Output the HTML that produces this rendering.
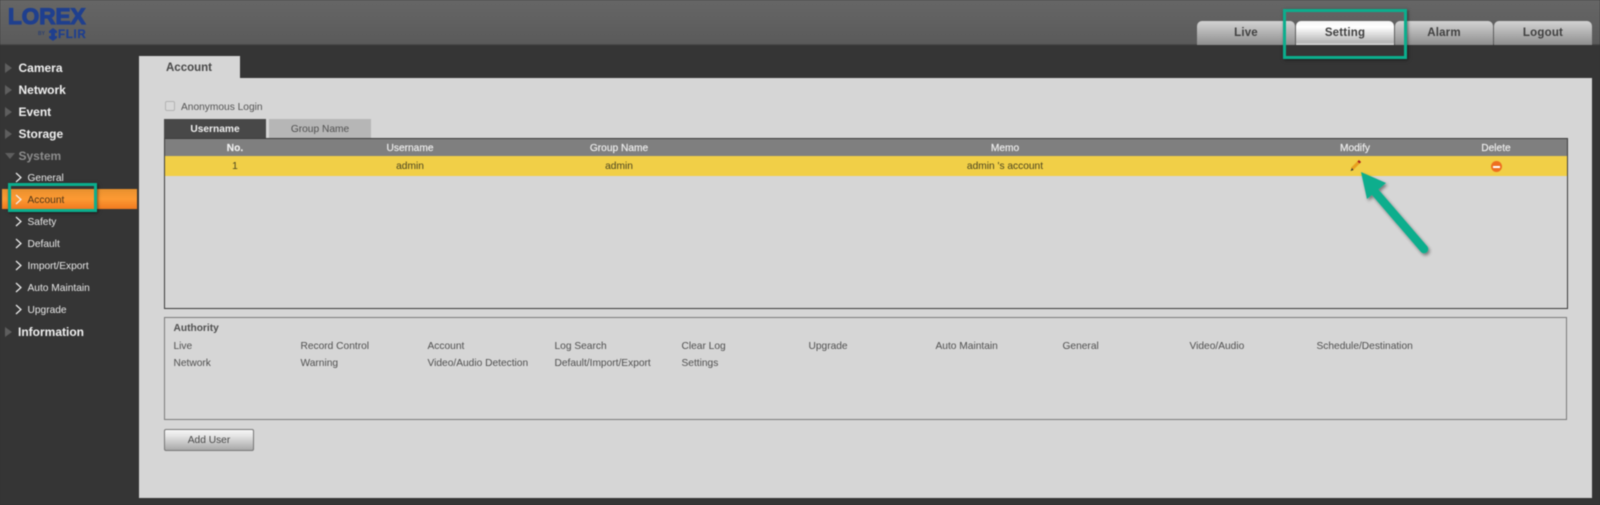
<!DOCTYPE html>
<html><head><meta charset="utf-8"><style>
html,body{margin:0;padding:0;background:#353535}
#p{position:relative;width:1600px;height:505px;overflow:hidden;background:#353535;font-family:"Liberation Sans",sans-serif;font-size:10.2px;color:#4a4a4a;filter:blur(.4px)}
#p div{position:absolute;box-sizing:border-box;white-space:nowrap}
.hd{left:0;top:0;width:1600px;height:45px;background:linear-gradient(#666,#5a5a5a)}
.tab{top:21px;height:24px;width:98px;border-radius:5px 5px 0 0;background:linear-gradient(#d2d2d2,#c6c6c6 20%,#8e8e8e);text-align:center;font-weight:bold;font-size:11.5px;line-height:24px;color:#404040;letter-spacing:.2px}
.nb{left:18.5px;font-weight:bold;font-size:12px;color:#f0f0f0;height:16px;line-height:16px}
.ns{left:27.5px;font-size:10.2px;color:#e8e8e8;height:14px;line-height:14px}
.tri{left:5px;width:0;height:0;border-left:7px solid #5e5e5e;border-top:5px solid transparent;border-bottom:5px solid transparent}
.th{top:140px;height:17px;line-height:17px;transform:translateX(-50%);color:#f0f0f0;-webkit-text-stroke:.15px #f0f0f0}
.td{top:157px;height:20px;line-height:20px;transform:translateX(-50%);color:#4a4420}
.a{height:14px;line-height:14px;color:#505050}
</style></head><body><div id="p">
<div class="hd"></div>
<div style="left:0;top:44px;width:1600px;height:1px;background:#4a4a4a"></div>
<div style="left:8px;top:4px;font-size:22.500px;font-weight:bold;color:#1f3f8e;line-height:26px;-webkit-text-stroke:1.2px #1f3f8e">LOREX</div>
<div style="left:38px;top:31px;font-size:5px;font-weight:bold;color:#2a3f70;line-height:7px">BY</div>
<svg style="position:absolute;left:48px;top:28px" width="10" height="13" viewBox="0 0 10 13"><path d="M5 0L9 3V5H7V8H9V10L5 13L1 10V8H3V5H1V3Z" fill="#1f3f8e"/></svg>
<div style="left:58px;top:28.500px;font-size:11.500px;font-weight:bold;color:#1f3f8e;line-height:12px;letter-spacing:.7px;-webkit-text-stroke:.3px #1f3f8e">FLIR</div>

<div class="tab" style="left:1197px">Live</div>
<div class="tab" style="left:1296px;background:linear-gradient(#f6f6f6,#fff 25%,#b5b5b5 90%,#e8e8e8)">Setting</div>
<div class="tab" style="left:1395px">Alarm</div>
<div class="tab" style="left:1494px">Logout</div>
<div style="left:1283px;top:9px;width:124px;height:50px;border:3px solid #0bae8d;box-shadow:1px 1px 3px rgba(0,0,0,.5)"></div>

<div class="tri" style="top:63px"></div><div class="nb" style="top:60px">Camera</div>
<div class="tri" style="top:85px"></div><div class="nb" style="top:82px">Network</div>
<div class="tri" style="top:107px"></div><div class="nb" style="top:104px">Event</div>
<div class="tri" style="top:129px"></div><div class="nb" style="top:126px">Storage</div>
<div style="left:5px;top:153px;width:0;height:0;border-top:6px solid #5e5e5e;border-left:5px solid transparent;border-right:5px solid transparent"></div>
<div class="nb" style="top:148px;color:#8c8c8c">System</div>

<div style="left:2px;top:189px;width:135px;height:20px;background:linear-gradient(#e8902e,#fd9a33 50%,#f17a20)"></div>
<svg style="position:absolute;left:14px;top:170px" width="10" height="146" viewBox="0 0 10 146" fill="none" stroke="#f0f0f0" stroke-width="1.200"><path d="M2 3L7 7.500L2 12M2 25L7 29.500L2 34M2 47L7 51.500L2 56M2 69L7 73.500L2 78M2 91L7 95.500L2 100M2 113L7 117.500L2 122M2 135L7 139.500L2 144"/></svg>
<div class="ns" style="top:172px">General</div>
<div class="ns" style="top:194px;color:#4a3318">Account</div>
<div class="ns" style="top:216px">Safety</div>
<div class="ns" style="top:238px">Default</div>
<div class="ns" style="top:260px">Import/Export</div>
<div class="ns" style="top:282px">Auto Maintain</div>
<div class="ns" style="top:304px">Upgrade</div>
<div class="tri" style="top:327px"></div><div class="nb" style="top:324px;left:18px">Information</div>
<div style="left:8px;top:183px;width:89px;height:29px;border:3px solid #0bae8d;box-shadow:1px 1px 3px rgba(0,0,0,.5)"></div>

<div style="left:139px;top:56px;width:101px;height:23px;background:#d6d6d6;font-weight:bold;font-size:11.500px;line-height:23px;padding-top:1px;padding-left:27px;color:#484848">Account</div>
<div style="left:139px;top:78px;width:1453px;height:420px;background:#d6d6d6"></div>

<div style="left:165px;top:101px;width:10px;height:10px;background:#d8d8d8;border:1px solid #b4b4b4;border-radius:2px"></div>
<div style="left:181px;top:101px;height:14px;line-height:14px;color:#555">Anonymous Login</div>

<div style="left:164px;top:119px;width:102px;height:19px;background:#484848;color:#f0f0f0;font-weight:bold;text-align:center;line-height:21px">Username</div>
<div style="left:269px;top:119px;width:102px;height:19px;background:#b6b6b6;color:#505050;text-align:center;line-height:21px">Group Name</div>

<div style="left:164px;top:138px;width:1404px;height:171px;border:1px solid #3c3c3c"></div>
<div style="left:165px;top:139px;width:1402px;height:17px;background:#7f7f7f"></div>
<div style="left:165px;top:156px;width:1402px;height:20px;background:#f1cf47"></div>
<div class="th" style="left:235px;font-weight:bold">No.</div>
<div class="th" style="left:410px">Username</div>
<div class="th" style="left:619px">Group Name</div>
<div class="th" style="left:1005px">Memo</div>
<div class="th" style="left:1355px">Modify</div>
<div class="th" style="left:1496px">Delete</div>
<div class="td" style="left:235px">1</div>
<div class="td" style="left:410px">admin</div>
<div class="td" style="left:619px">admin</div>
<div class="td" style="left:1005px">admin 's account</div>

<svg style="position:absolute;left:1348px;top:158px" width="16" height="16" viewBox="0 0 16 16"><path d="M4 11L11 4" stroke="#e8a020" stroke-width="3.200"/><path d="M10.500 4.500L12 3" stroke="#a8201c" stroke-width="3"/><path d="M4 10L2.500 13L5.500 12Z" fill="#333"/></svg>
<div style="left:1491px;top:161px;width:11px;height:11px;border-radius:50%;background:#ee6f1f"></div>
<div style="left:1493px;top:165.500px;width:7px;height:2px;background:#fff"></div>

<svg style="position:absolute;left:1340px;top:160px" width="100" height="100" viewBox="0 0 100 100"><defs><filter id="s" x="-20%" y="-20%" width="140%" height="140%"><feDropShadow dx="1.500" dy="2" stdDeviation="1.500" flood-color="#000" flood-opacity=".45"/></filter></defs><g filter="url(#s)"><path d="M35 32L84 89" stroke="#0bae8d" stroke-width="8.500" stroke-linecap="round"/><path d="M21 12L46 23L27 39Z" fill="#0bae8d"/></g></svg>

<div style="left:164px;top:317px;width:1403px;height:103px;border:1px solid #7c7c7c"></div>
<div class="a" style="left:173.500px;top:322px;font-weight:bold">Authority</div>
<div class="a" style="left:173.500px;top:340px">Live</div>
<div class="a" style="left:300.500px;top:340px">Record Control</div>
<div class="a" style="left:427.500px;top:340px">Account</div>
<div class="a" style="left:554.500px;top:340px">Log Search</div>
<div class="a" style="left:681.500px;top:340px">Clear Log</div>
<div class="a" style="left:808.500px;top:340px">Upgrade</div>
<div class="a" style="left:935.500px;top:340px">Auto Maintain</div>
<div class="a" style="left:1062.500px;top:340px">General</div>
<div class="a" style="left:1189.500px;top:340px">Video/Audio</div>
<div class="a" style="left:1316.500px;top:340px">Schedule/Destination</div>
<div class="a" style="left:173.500px;top:357px">Network</div>
<div class="a" style="left:300.500px;top:357px">Warning</div>
<div class="a" style="left:427.500px;top:357px">Video/Audio Detection</div>
<div class="a" style="left:554.500px;top:357px">Default/Import/Export</div>
<div class="a" style="left:681.500px;top:357px">Settings</div>

<div style="left:164px;top:429px;width:90px;height:22px;border:1px solid #777;border-radius:2px;background:linear-gradient(#f6f6f6,#e4e4e4 30%,#a8a8a8);text-align:center;line-height:22px;color:#484848">Add User</div>
</div></body></html>
